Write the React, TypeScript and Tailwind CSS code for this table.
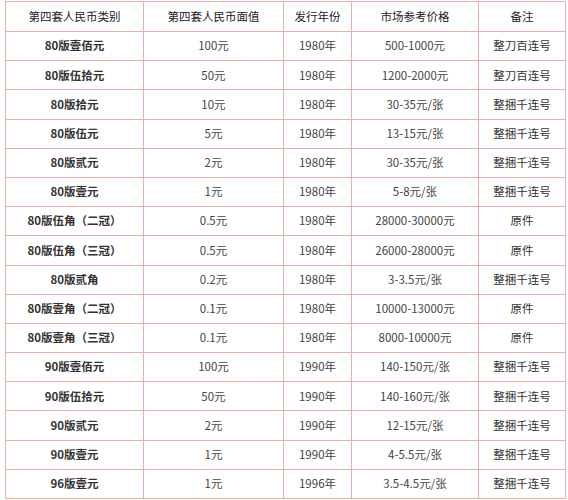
import React from 'react';

type Row = {
  kind: string;
  face: string;
  year: string;
  price: string;
  note: string;
};

const rows: Row[] = [
  { kind: '80版壹佰元', face: '100元', year: '1980年', price: '500-1000元', note: '整刀百连号' },
  { kind: '80版伍拾元', face: '50元', year: '1980年', price: '1200-2000元', note: '整刀百连号' },
  { kind: '80版拾元', face: '10元', year: '1980年', price: '30-35元/张', note: '整捆千连号' },
  { kind: '80版伍元', face: '5元', year: '1980年', price: '13-15元/张', note: '整捆千连号' },
  { kind: '80版贰元', face: '2元', year: '1980年', price: '30-35元/张', note: '整捆千连号' },
  { kind: '80版壹元', face: '1元', year: '1980年', price: '5-8元/张', note: '整捆千连号' },
  { kind: '80版伍角（二冠）', face: '0.5元', year: '1980年', price: '28000-30000元', note: '原件' },
  { kind: '80版伍角（三冠）', face: '0.5元', year: '1980年', price: '26000-28000元', note: '原件' },
  { kind: '80版贰角', face: '0.2元', year: '1980年', price: '3-3.5元/张', note: '整捆千连号' },
  { kind: '80版壹角（二冠）', face: '0.1元', year: '1980年', price: '10000-13000元', note: '原件' },
  { kind: '80版壹角（三冠）', face: '0.1元', year: '1980年', price: '8000-10000元', note: '原件' },
  { kind: '90版壹佰元', face: '100元', year: '1990年', price: '140-150元/张', note: '整捆千连号' },
  { kind: '90版伍拾元', face: '50元', year: '1990年', price: '140-160元/张', note: '整捆千连号' },
  { kind: '90版贰元', face: '2元', year: '1990年', price: '12-15元/张', note: '整捆千连号' },
  { kind: '90版壹元', face: '1元', year: '1990年', price: '4-5.5元/张', note: '整捆千连号' },
  { kind: '96版壹元', face: '1元', year: '1996年', price: '3.5-4.5元/张', note: '整捆千连号' },
];

// collapsed borders: height counts the shared line
const cell = 'border border-[#e5b1a8] text-center align-middle p-0';

export default function App() {
  return (
    <div className="w-[568px] h-[500px] bg-white pt-px pl-[5px] text-[#333] text-[11.5px] leading-none font-['Microsoft_YaHei','Noto_Sans_CJK_SC',sans-serif]">
      <table className="border-collapse table-fixed w-[560px]">
        <colgroup>
          <col className="w-[138px]" />
          <col className="w-[140px]" />
          <col className="w-[68px]" />
          <col className="w-[127px]" />
          <col className="w-[87px]" />
        </colgroup>
        <thead>
          <tr>
            <th className={`${cell} h-[30px] font-normal text-[#222]`}>第四套人民币类别</th>
            <th className={`${cell} h-[30px] font-normal text-[#222]`}>第四套人民币面值</th>
            <th className={`${cell} h-[30px] font-normal text-[#222]`}>发行年份</th>
            <th className={`${cell} h-[30px] font-normal text-[#222]`}>市场参考价格</th>
            <th className={`${cell} h-[30px] font-normal text-[#222]`}>备注</th>
          </tr>
        </thead>
        <tbody>
          {rows.map((r) => (
            <tr key={r.kind}>
              <td className={`${cell} h-[29.2px] font-bold text-[#333]`}>{r.kind}</td>
              <td className={`${cell} h-[29.2px] text-[#444]`}>{r.face}</td>
              <td className={`${cell} h-[29.2px] text-[#444]`}>{r.year}</td>
              <td className={`${cell} h-[29.2px] text-[#444]`}>{r.price}</td>
              <td className={`${cell} h-[29.2px] text-[#333]`}>{r.note}</td>
            </tr>
          ))}
        </tbody>
      </table>
    </div>
  );
}
